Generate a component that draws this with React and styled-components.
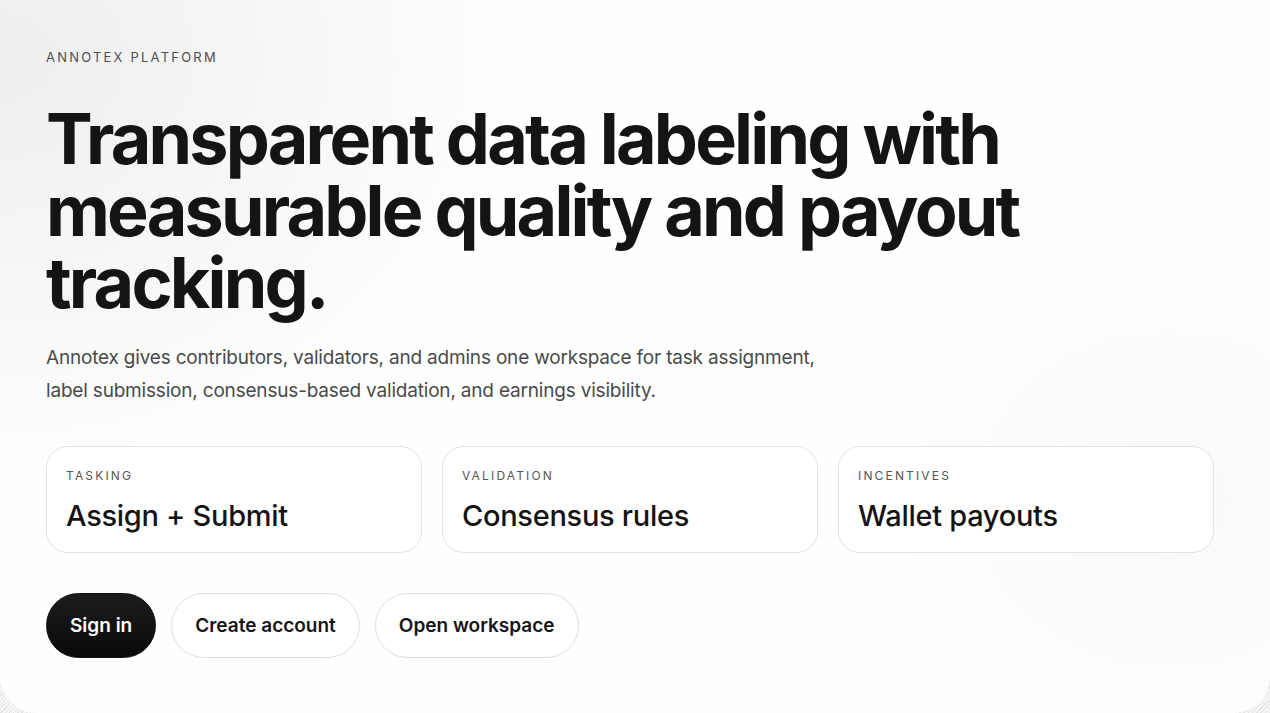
import React from "react";
import styled, { createGlobalStyle } from "styled-components";

const GlobalStyle = createGlobalStyle`
	html, body {
		margin: 0;
		padding: 0;
		background: repeating-linear-gradient(135deg, #e4e4e4 0 1px, #f6f6f6 1px 3px);
	}
	* {
		box-sizing: border-box;
	}
`;

const features = [
	{ id: "tasking", label: "TASKING", title: "Assign + Submit" },
	{ id: "validation", label: "VALIDATION", title: "Consensus rules" },
	{ id: "incentives", label: "INCENTIVES", title: "Wallet payouts" },
];

const App = () => {
	return (
		<>
			<GlobalStyle />
			<StyledHero>
				<StyledEyebrow>ANNOTEX PLATFORM</StyledEyebrow>
				<StyledHeadline>
					Transparent data labeling with measurable quality and payout
					tracking.
				</StyledHeadline>
				<StyledLead>
					Annotex gives contributors, validators, and admins one workspace for
					task assignment, label submission, consensus-based validation, and
					earnings visibility.
				</StyledLead>
				<StyledFeatureGrid>
					{features.map((item) => (
						<StyledFeature key={item.id}>
							<StyledFeatureLabel>{item.label}</StyledFeatureLabel>
							<StyledFeatureTitle>{item.title}</StyledFeatureTitle>
						</StyledFeature>
					))}
				</StyledFeatureGrid>
				<StyledActions>
					<StyledButton $primary>Sign in</StyledButton>
					<StyledButton>Create account</StyledButton>
					<StyledButton>Open workspace</StyledButton>
				</StyledActions>
			</StyledHero>
		</>
	);
};

export default App;

const StyledHero = styled.section`
	min-height: 713px;
	padding: 48px 56px 55px 46px;
	border-radius: 0 0 36px 36px;
	background:
		radial-gradient(ellipse 520px 420px at 0% 8%, rgba(236, 236, 236, 0.9), rgba(255, 255, 255, 0) 100%),
		radial-gradient(ellipse 300px 260px at 92% 70%, rgba(246, 246, 246, 0.6), rgba(255, 255, 255, 0) 100%),
		#fefefe;
	font-family: "Inter", "Liberation Sans", sans-serif;
	color: #141414;
`;

const StyledEyebrow = styled.p`
	margin: 0;
	font-size: 13px;
	line-height: 18px;
	letter-spacing: 0.17em;
	color: #4f4f4f;
`;

const StyledHeadline = styled.h1`
	margin: 37px 0 0 0;
	max-width: 1010px;
	font-size: 70px;
	line-height: 72px;
	font-weight: 700;
	letter-spacing: -0.04em;
	color: #141414;
`;

const StyledLead = styled.p`
	margin: 22px 0 0 0;
	max-width: 790px;
	font-size: 19px;
	line-height: 33px;
	letter-spacing: -0.01em;
	color: #4a4a4a;
`;

const StyledFeatureGrid = styled.div`
	display: grid;
	grid-template-columns: repeat(3, 1fr);
	gap: 20px;
	margin-top: 39px;
`;

const StyledFeature = styled.div`
	height: 107px;
	padding: 20px 19px;
	border: 1px solid #e3e3e3;
	border-radius: 22px;
	background: #ffffff;
`;

const StyledFeatureLabel = styled.p`
	margin: 0;
	font-size: 12px;
	line-height: 17px;
	letter-spacing: 0.18em;
	color: #555555;
`;

const StyledFeatureTitle = styled.h3`
	margin: 15px 0 0 0;
	font-size: 29px;
	line-height: 34px;
	font-weight: 500;
	letter-spacing: -0.01em;
	color: #141414;
`;

const StyledActions = styled.div`
	display: flex;
	gap: 15px;
	margin-top: 40px;
`;

const StyledButton = styled.button`
	height: 65px;
	padding: 0 23px;
	border-radius: 999px;
	border: 1px solid ${(p) => (p.$primary ? "#111" : "#dedede")};
	background: ${(p) => (p.$primary ? "linear-gradient(180deg, #1c1c1c, #0a0a0a)" : "#ffffff")};
	color: ${(p) => (p.$primary ? "#ffffff" : "#161616")};
	font-family: "Inter", "Liberation Sans", sans-serif;
	font-size: 19px;
	font-weight: 600;
	letter-spacing: 0;
	cursor: pointer;
`;
